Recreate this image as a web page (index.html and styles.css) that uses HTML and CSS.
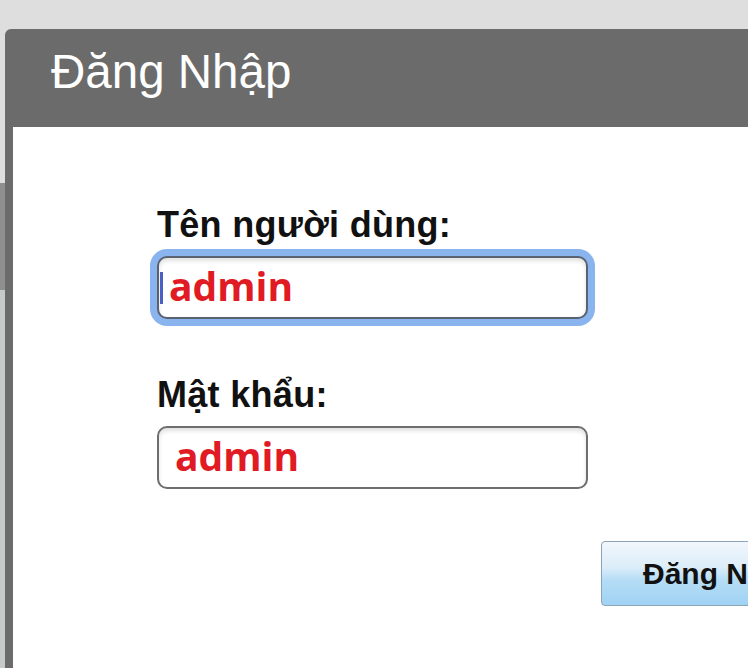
FILE: index.html
```html
<!DOCTYPE html>
<html lang="vi">
<head>
    <meta charset="UTF-8">
    <meta name="viewport" content="width=device-width, initial-scale=1.0">
    <title>Đăng Nhập</title>
    <link rel="stylesheet" href="styles.css">
</head>
<body>
    <div class="dialog">
        <div class="dialog-header">
            <h1>Đăng Nhập</h1>
        </div>
        <div class="dialog-body">
            <form class="login-form">
                <div class="form-group">
                    <label for="username">Tên người dùng:</label>
                    <div class="field focused">
                        <span class="caret"></span>
                        <input type="text" id="username" value="admin">
                    </div>
                </div>
                <div class="form-group">
                    <label for="password">Mật khẩu:</label>
                    <div class="field">
                        <input type="text" id="password" value="admin">
                    </div>
                </div>
                <button type="button" class="login-btn">Đăng Nhập</button>
            </form>
        </div>
    </div>
</body>
</html>
```

FILE: styles.css
```css
html, body {
    height: 100%;
}
body {
    margin: 0;
    overflow: hidden;
    font-family: "Liberation Sans", Arial, sans-serif;
    background: linear-gradient(to bottom, #dedede 0, #dedede 183px, #8f8f8f 183px, #8f8f8f 290px, #c6cac9 290px);
}
.dialog {
    margin: 29px 0 0 5px;
    height: 639px;
    background-color: #6b6b6b;
    border-radius: 6px 0 0 0;
    display: flex;
    flex-direction: column;
}
.dialog-header {
    height: 98px;
    box-sizing: border-box;
    padding: 16px 0 0 46px;
}
.dialog-header h1 {
    margin: 0;
    font-size: 47.5px;
    font-weight: normal;
    line-height: 54px;
    color: #fff;
}
.dialog-body {
    flex: 1;
    margin-left: 8px;
    background-color: #fff;
    padding: 77px 0 0 144px;
}
.form-group {
    display: flex;
    flex-direction: column;
    gap: 10px;
    margin-bottom: 55px;
}
.form-group label {
    font-size: 36px;
    font-weight: bold;
    line-height: 42px;
    letter-spacing: 0.3px;
    color: #111;
}
.field {
    width: 431px;
    height: 63px;
    box-sizing: border-box;
    border: 2px solid #6e6e6e;
    border-radius: 10px;
    box-shadow: inset 0 3px 4px rgba(0, 0, 0, 0.12);
    display: flex;
    align-items: center;
    padding-left: 16px;
    background-color: #fff;
}
.field.focused {
    border-color: #5a6171;
    padding-left: 1px;
    box-shadow: 0 0 0 7px #89b4ee, inset 0 3px 4px rgba(0, 0, 0, 0.12);
}
.caret {
    width: 3px;
    height: 32px;
    margin: 0 6px 0 0;
    background-color: #4b5fc5;
}
.field input {
    flex: 1;
    min-width: 0;
    border: none;
    outline: none;
    padding: 0;
    margin-top: -5px;
    background: transparent;
    font-family: "Open Sans", sans-serif;
    font-size: 39px;
    font-weight: bold;
    color: #e01b24;
}
.login-btn {
    margin: -3px 0 0 444px;
    width: 220px;
    height: 65px;
    padding: 0 0 0 41px;
    text-align: left;
    white-space: nowrap;
    border: 1px solid #8ca4b8;
    border-radius: 4px;
    background: linear-gradient(to bottom, #f2f7fc 0%, #dcedf9 40%, #b6ddf6 60%, #9fd2f3 100%);
    font-family: "Liberation Sans", Arial, sans-serif;
    font-size: 30px;
    font-weight: bold;
    color: #111;
    cursor: pointer;
}
```
